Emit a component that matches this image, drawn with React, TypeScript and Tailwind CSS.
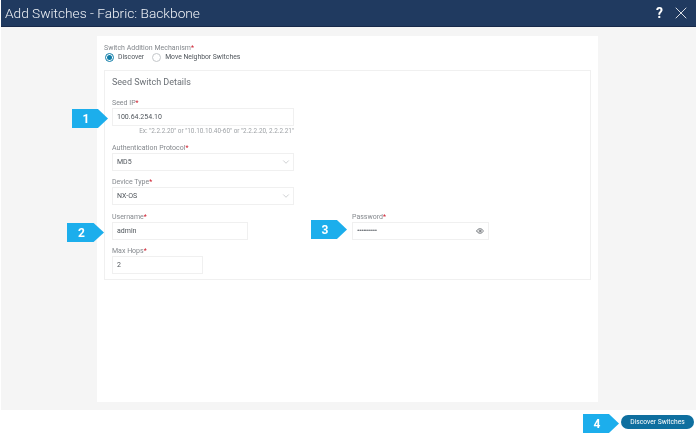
import React from "react";
import { ChevronDown, Eye, X } from "lucide-react";

const Label = ({ text }: { text: string }) => (
  <div className="text-[7px] leading-[9px] text-[#85898e]">
    {text}
    <span className="text-[#cf2030]">*</span>
  </div>
);

const Badge = ({ n, className }: { n: string; className: string }) => (
  <div
    className={`absolute h-[19px] bg-[#1caeec] flex items-center justify-center pr-[8px] text-white text-[12px] font-bold [clip-path:polygon(0_0,72%_0,100%_50%,72%_100%,0_100%)] ${className}`}
  >
    {n}
  </div>
);

const Field = ({ value, className }: { value: string; className: string }) => (
  <div className={`h-[18px] bg-white border border-[#f0f0f0] flex items-center pl-[4px] pr-[6px] text-[7px] text-[#4f555b] ${className}`}>
    {value}
  </div>
);

const Select = ({ value }: { value: string }) => (
  <div className="w-[182px] h-[18px] bg-white border border-[#f0f0f0] flex items-center justify-between pl-[4px] pr-[2px] text-[7px] text-[#4f555b]">
    {value}
    <ChevronDown size={10} strokeWidth={1} className="text-[#8b8f94]" />
  </div>
);

export default function App() {
  return (
    <div className="relative w-[696px] h-[436px] bg-white flex flex-col overflow-hidden font-['Roboto',sans-serif] blur-[0.35px]">
      <header className="h-[27px] ml-[1px] bg-[#203a60] border-b border-[#17294a] flex items-center justify-between pl-[4px] pr-[5px] shrink-0">
        <h1 className="text-[13.7px] font-light text-[#f0f3f7]">Add Switches - Fabric: Backbone</h1>
        <div className="flex items-center gap-[8px] text-white">
          <span className="text-[14px] leading-[15px] font-bold">?</span>
          <X size={20} strokeWidth={1} />
        </div>
      </header>

      <main className="h-[383px] ml-[1px] bg-[#f5f5f5] pt-[9px] pb-[8px] pl-[96px] pr-[98px] shrink-0">
        <div className="h-full bg-white pt-[8px] px-[7px]">
          <Label text="Switch Addition Mechanism" />
          <div className="flex items-center gap-[8px] text-[6.8px] leading-[9px] text-[#4f555b] pl-[1px]">
            <div className="flex items-center gap-[4px]">
              <span className="w-[9px] h-[9px] rounded-full border border-[#0f7da8] flex items-center justify-center">
                <span className="w-[5px] h-[5px] rounded-full bg-[#0f7da8]" />
              </span>
              Discover
            </div>
            <div className="flex items-center gap-[4px]">
              <span className="w-[9px] h-[9px] rounded-full border border-[#c4c7ca]" />
              Move Neighbor Switches
            </div>
          </div>

          <section className="h-[210px] mt-[8px] border border-[#f0f0f0] pt-[6px] pl-[7px]">
            <h2 className="text-[9px] leading-[11px] text-[#6b7076]">Seed Switch Details</h2>
            <div className="mt-[11px]">
              <Label text="Seed IP" />
              <Field value="100.64.254.10" className="w-[182px]" />
              <div className="w-[182px] text-right text-[6.4px] leading-[8px] mt-[1px] text-[#9ea2a6]">
                Ex: "2.2.2.20" or "10.10.10.40-60" or "2.2.2.20, 2.2.2.21"
              </div>
            </div>
            <div className="mt-[9px]">
              <Label text="Authentication Protocol" />
              <Select value="MD5" />
            </div>
            <div className="mt-[7px]">
              <Label text="Device Type" />
              <Select value="NX-OS" />
            </div>
            <div className="flex mt-[8px]">
              <div className="w-[240px]">
                <Label text="Username" />
                <Field value="admin" className="w-[136px]" />
              </div>
              <div>
                <Label text="Password" />
                <div className="w-[137px] h-[18px] bg-white border border-[#f0f0f0] flex items-center justify-between pl-[4px] pr-[4px] text-[7px] text-[#4f555b]">
                  <span className="tracking-[-0.4px]">••••••••••</span>
                  <Eye size={8} strokeWidth={2.4} className="text-[#5f6469]" />
                </div>
              </div>
            </div>
            <div className="mt-[7px]">
              <Label text="Max Hops" />
              <Field value="2" className="w-[91px]" />
            </div>
          </section>
        </div>
      </main>

      <footer className="flex-1 flex items-center justify-end pr-[2px] pb-[2px]">
        <button className="w-[73px] h-[14px] rounded-full bg-[#0f6f9f] text-white text-[6.7px] flex items-center justify-center">
          Discover Switches
        </button>
      </footer>

      <Badge n="1" className="left-[72px] top-[109px] w-[36px]" />
      <Badge n="2" className="left-[67px] top-[223px] w-[37px]" />
      <Badge n="3" className="left-[311px] top-[220px] w-[36px]" />
      <Badge n="4" className="left-[583px] top-[414px] w-[36px]" />
    </div>
  );
}
